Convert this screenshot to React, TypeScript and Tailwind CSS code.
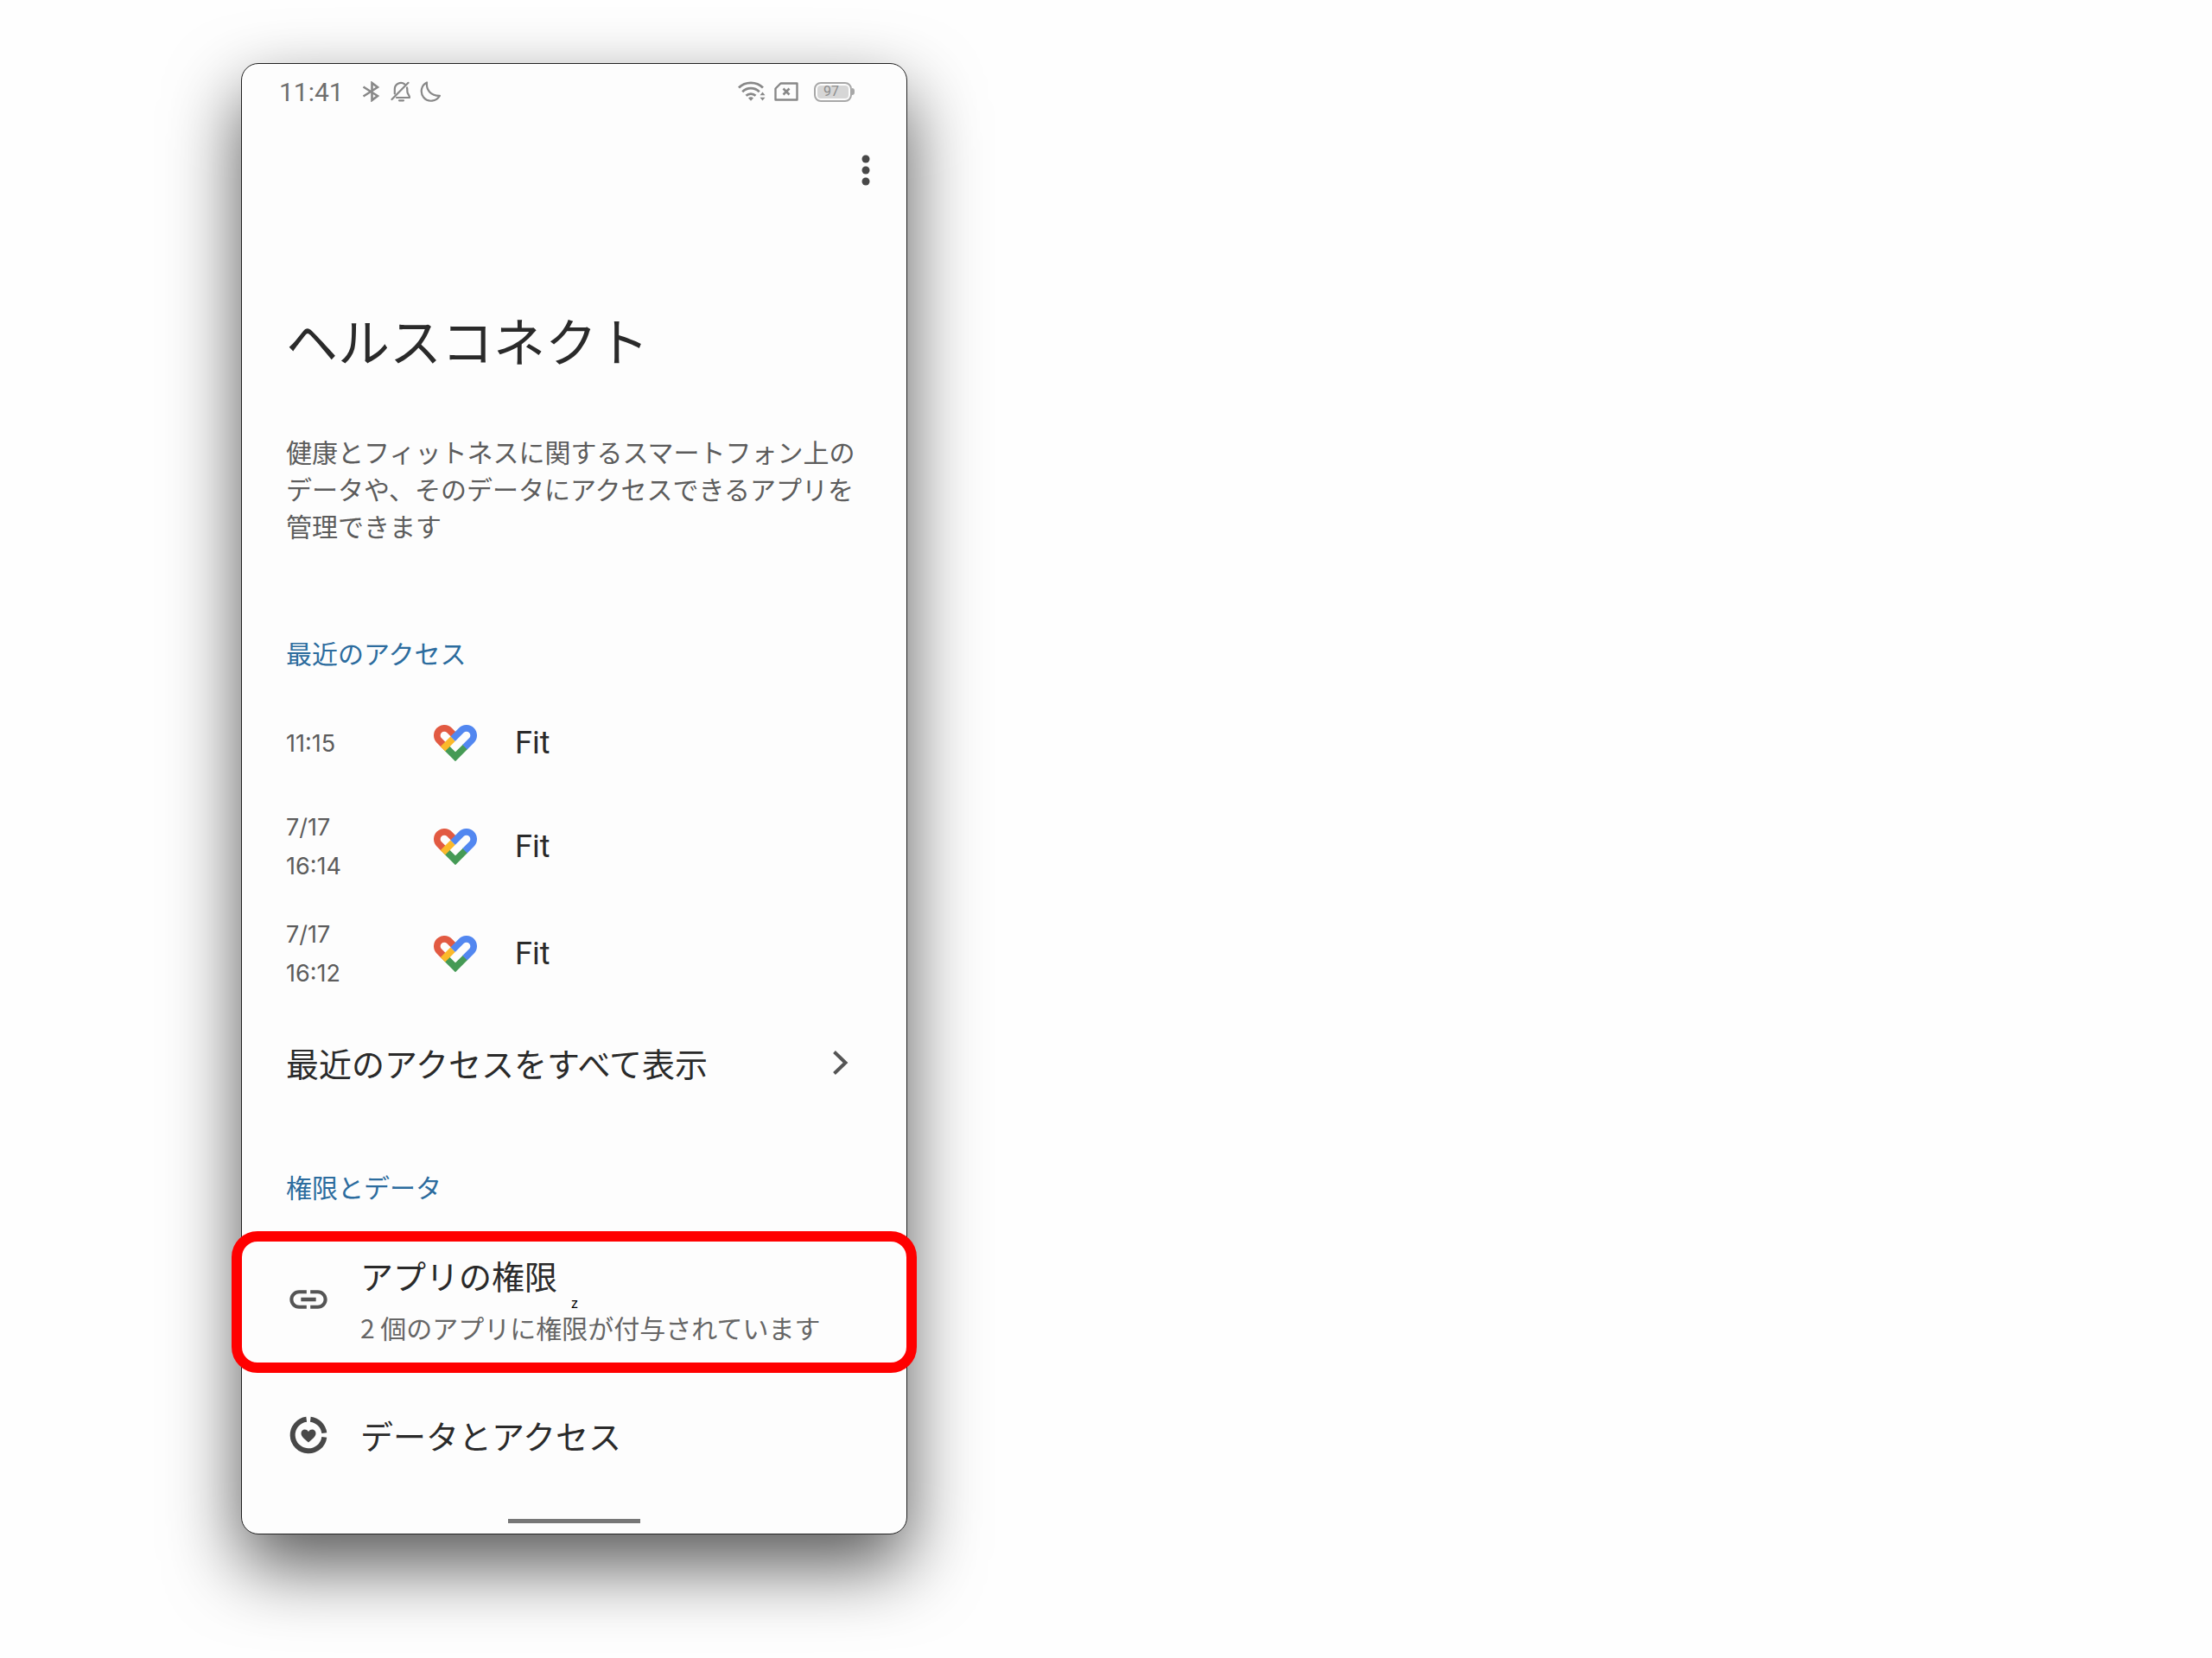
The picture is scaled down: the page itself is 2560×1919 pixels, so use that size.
import type { ReactNode } from "react";

type Access = { id: number; lines: string[]; app: string };

const recentAccess: Access[] = [
  { id: 1, lines: ["11:15"], app: "Fit" },
  { id: 2, lines: ["7/17", "16:14"], app: "Fit" },
  { id: 3, lines: ["7/17", "16:12"], app: "Fit" },
];

function BluetoothIcon() {
  return (
    <svg width="24" height="24" viewBox="0 0 24 24" fill="none" stroke="currentColor" strokeWidth="2.6" aria-hidden="true">
      <path d="M2.500 6.500 19 17l-6.500 5v-20L19 7 2.500 17.500" />
    </svg>
  );
}

function BellOffIcon() {
  return (
    <svg width="24" height="24" viewBox="0 0 24 24" fill="none" stroke="currentColor" strokeWidth="2.2" strokeLinecap="round" strokeLinejoin="round" aria-hidden="true">
      <path d="M4.800 14.500V9.500A7.200 7.200 0 0 1 16.500 3.600" />
      <path d="M19 7.500c.4 1 .4 2 .4 4.500 0 3 2.600 3.800 2.600 7H7" />
      <path d="M10 22.300h5" />
      <path d="M20.500 1.800 1.500 21" />
    </svg>
  );
}

function MoonIcon() {
  return (
    <svg width="24" height="24" viewBox="0 0 24 24" fill="none" stroke="currentColor" strokeWidth="2.2" strokeLinejoin="round" aria-hidden="true">
      <path d="M8 1.500C7 10 12.500 17 23 16.800 19 23.500 9.500 25 4.300 18.800-.2 13 1.500 4.500 8 1.500Z" />
    </svg>
  );
}

function WifiIcon() {
  return (
    <svg width="32" height="24" viewBox="0 0 32 24" fill="none" stroke="currentColor" strokeWidth="2.8" aria-hidden="true">
      <path d="M1 7.500C8.500 0 21.500 0 29 7.500" />
      <path d="M5.200 12.200c5.500-5.400 14-5.400 19.600 0" />
      <path d="M9.500 16.800c3.200-3 7.800-3 11 0" />
      <path d="M12 19.500c1.800-1.600 4.200-1.600 6 0l-3 3.200z" fill="currentColor" stroke="none" />
      <path d="m28.500 12.500 3 3.700h-6zM28.500 22.500l3-3.700h-6z" fill="currentColor" stroke="none" />
    </svg>
  );
}

function NoSimIcon() {
  return (
    <svg width="28" height="24" viewBox="0 0 28 24" fill="none" stroke="currentColor" strokeWidth="2.4" strokeLinejoin="round" aria-hidden="true">
      <path d="M7.500 2.500H26.500v19h-25V8.500z" />
      <path d="m10.500 8.500 7 7M17.500 8.500l-7 7" strokeWidth="2.600" />
    </svg>
  );
}

function Battery({ level }: { level: number }) {
  return (
    <div className="flex items-center" aria-label={`${level}%`}>
      <div className="h-[23px] w-11 rounded-lg border-2 border-[#a8a8a8] p-0.5">
        <div className="flex h-full items-center justify-center rounded-sm bg-[#d6d6d6] pr-1 font-[Roboto] text-base leading-none text-[#8c8c8c]">
          {level}
        </div>
      </div>
      <div className="h-2 w-[3px] rounded-r-sm bg-[#a8a8a8]" />
    </div>
  );
}

function MoreIcon() {
  return (
    <svg width="48" height="48" viewBox="0 0 48 48" fill="currentColor" aria-hidden="true">
      <circle cx="24" cy="11" r="4.500" />
      <circle cx="24" cy="24" r="4.500" />
      <circle cx="24" cy="37" r="4.500" />
    </svg>
  );
}

function FitLogo() {
  return (
    <svg width="50" height="42" viewBox="0 0 150 126" fill="none" strokeWidth="23" aria-hidden="true">
      <path d="M75 39.600 54.200 18.800A25 25 0 1 0 18.800 54.200L39.600 75" stroke="#e25a42" />
      <path d="M39.600 75 75 110.400 110 75.400" stroke="#459a55" />
      <path d="M66 48.600 95.800 18.800A25 25 0 1 1 131.200 54.200L108 77.400" stroke="#5287f0" />
      <path d="M66 48.600 31.500 83.100" stroke="#fbb92a" />
    </svg>
  );
}

function ChevronIcon() {
  return (
    <svg width="20" height="30" viewBox="0 0 20 30" fill="none" stroke="currentColor" strokeWidth="4" aria-hidden="true">
      <path d="m2.500 2.500 13 12.500-13 12.500" />
    </svg>
  );
}

function LinkIcon() {
  return (
    <svg width="52" height="52" viewBox="0 0 24 24" fill="currentColor" aria-hidden="true">
      <path d="M3.900 12c0-1.710 1.390-3.100 3.100-3.100h4V7H7c-2.760 0-5 2.240-5 5s2.240 5 5 5h4v-1.900H7c-1.710 0-3.100-1.390-3.100-3.100zM8 13h8v-2H8v2zm9-6h-4v1.900h4c1.710 0 3.100 1.390 3.100 3.100s-1.390 3.100-3.100 3.100h-4V17h4c2.760 0 5-2.240 5-5s-2.240-5-5-5z" />
    </svg>
  );
}

function DataIcon() {
  return (
    <svg width="52" height="52" viewBox="0 0 52 52" fill="none" aria-hidden="true">
      <path d="M28.300 7.700A18.400 18.400 0 0 1 44.300 23.700M44.300 28.300A18.400 18.400 0 1 1 23.700 7.700" stroke="currentColor" strokeWidth="6" />
      <path d="M26 34.500c-5-4.300-8.500-7-8.500-10.500 0-5 6-6 8.500-2 2.500-4 8.500-3 8.500 2 0 3.500-3.500 6.200-8.500 10.500z" fill="currentColor" />
    </svg>
  );
}

function SectionHeading({ children }: { children: ReactNode }) {
  return <h2 className="px-[51px] text-[30px] leading-11 text-[#2c6c9e]">{children}</h2>;
}

export default function App() {
  return (
    <div className="min-h-screen bg-[#fefefe] px-6 pt-[73px] pb-[142px] font-['Noto_Sans_CJK_JP',sans-serif] text-[#2a2a2a] lg:pl-[279px]">
      <main className="w-full max-w-[771px] rounded-[20px] border border-[#222] bg-[#fdfdfd] shadow-[0_36px_84px_rgba(0,0,0,0.66)]">
        <header className="flex h-16 items-center justify-between pr-15 pl-[43px] text-[#888]">
          <div className="flex items-center gap-2.5">
            <span className="mr-2.5 font-[Roboto] text-[30px] text-[#6e6e6e]">11:41</span>
            <BluetoothIcon />
            <BellOffIcon />
            <MoonIcon />
          </div>
          <div className="flex items-center">
            <WifiIcon />
            <div className="mr-[18px] ml-2.5">
              <NoSimIcon />
            </div>
            <Battery level={97} />
          </div>
        </header>

        <div className="flex justify-end pt-[35px] pr-[23px]">
          <button type="button" aria-label="その他" className="text-[#484848]">
            <MoreIcon />
          </button>
        </div>

        <h1 className="mt-[136px] px-[51px] text-[60px] leading-[72px]">ヘルスコネクト</h1>
        <p className="mt-[72px] px-[51px] text-[30px] leading-[43px] text-[#5c5c5c]">
          健康とフィットネスに関するスマートフォン上のデータや、そのデータにアクセスできるアプリを管理できます
        </p>

        <section className="mt-[103px]">
          <SectionHeading>最近のアクセス</SectionHeading>
          <ul className="mt-[25px]">
            {recentAccess.map((item) => (
              <li key={item.id} className="flex min-h-[116px] items-center px-[51px] py-[17px]">
                <div className="w-[171px] font-[Inter] text-[27px] leading-[45px] text-[#5c5c5c]">
                  {item.lines.map((line) => (
                    <div key={line}>{line}</div>
                  ))}
                </div>
                <FitLogo />
                <span className="ml-11 font-[Roboto] text-[36px] leading-[52px]">{item.app}</span>
              </li>
            ))}
          </ul>
          <a href="#recent" className="flex items-center justify-between pt-[38px] pr-[66px] pb-10 pl-[51px] text-[38px] leading-[52px]">
            最近のアクセスをすべて表示
            <span className="text-[#555]">
              <ChevronIcon />
            </span>
          </a>
        </section>

        <section className="mt-[55px]">
          <SectionHeading>権限とデータ</SectionHeading>
          <a
            href="#permissions"
            className="-mx-3 mt-[30px] flex items-center gap-[34px] rounded-[30px] border-12 border-[#ff0000] bg-[#fdfdfd] pt-[13px] pr-13 pb-[19px] pl-[51px]"
          >
            <span className="text-[#555]">
              <LinkIcon />
            </span>
            <span className="relative flex flex-col gap-3">
              <span className="text-[38px] leading-[52px]">アプリの権限</span>
              <span className="text-[30px] leading-11 text-[#666]">2 個のアプリに権限が付与されています</span>
              <span className="absolute top-[49px] left-[244px] font-['Liberation_Sans'] text-base leading-5 text-black">z</span>
            </span>
          </a>
          <a href="#data" className="flex h-36 items-center gap-[34px] pr-13 pl-[51px] text-[38px] leading-[52px]">
            <span className="text-[#484848]">
              <DataIcon />
            </span>
            データとアクセス
          </a>
        </section>

        <div className="mx-auto mt-[25px] mb-3 h-[5px] w-[153px] bg-[#777]" />
      </main>
    </div>
  );
}
